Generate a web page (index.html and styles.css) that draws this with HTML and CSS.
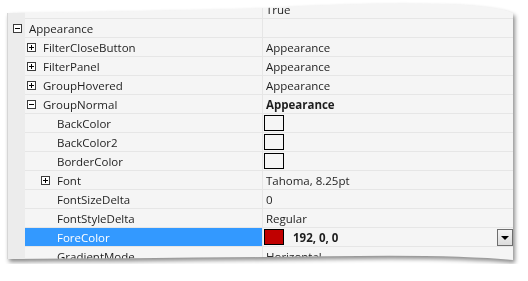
FILE: index.html
```html
<!DOCTYPE html>
<html lang="en">
<head>
    <meta charset="UTF-8">
    <meta name="viewport" content="width=device-width, initial-scale=1.0">
    <title>Property Grid</title>
    <link rel="stylesheet" href="styles.css">
</head>
<body>

    <div class="sheet">
        <div class="grid">

            <div class="row">
                <div class="gutter"></div>
                <div class="name l0"></div>
                <div class="value">True</div>
            </div>

            <div class="row">
                <div class="gutter"><span class="toggle"></span></div>
                <div class="name l0">Appearance</div>
                <div class="value"></div>
            </div>

            <div class="row">
                <div class="gutter"></div>
                <div class="name l1"><span class="toggle plus"></span>FilterCloseButton</div>
                <div class="value">Appearance</div>
            </div>

            <div class="row">
                <div class="gutter"></div>
                <div class="name l1"><span class="toggle plus"></span>FilterPanel</div>
                <div class="value">Appearance</div>
            </div>

            <div class="row">
                <div class="gutter"></div>
                <div class="name l1"><span class="toggle plus"></span>GroupHovered</div>
                <div class="value">Appearance</div>
            </div>

            <div class="row">
                <div class="gutter"></div>
                <div class="name l1"><span class="toggle"></span>GroupNormal</div>
                <div class="value bold">Appearance</div>
            </div>

            <div class="row">
                <div class="gutter"></div>
                <div class="name l2"><span class="toggle none"></span>BackColor</div>
                <div class="value"><span class="swatch"></span></div>
            </div>

            <div class="row">
                <div class="gutter"></div>
                <div class="name l2"><span class="toggle none"></span>BackColor2</div>
                <div class="value"><span class="swatch"></span></div>
            </div>

            <div class="row">
                <div class="gutter"></div>
                <div class="name l2"><span class="toggle none"></span>BorderColor</div>
                <div class="value"><span class="swatch"></span></div>
            </div>

            <div class="row">
                <div class="gutter"></div>
                <div class="name l2"><span class="toggle plus"></span>Font</div>
                <div class="value">Tahoma, 8.25pt</div>
            </div>

            <div class="row">
                <div class="gutter"></div>
                <div class="name l2"><span class="toggle none"></span>FontSizeDelta</div>
                <div class="value">0</div>
            </div>

            <div class="row">
                <div class="gutter"></div>
                <div class="name l2"><span class="toggle none"></span>FontStyleDelta</div>
                <div class="value">Regular</div>
            </div>

            <div class="row">
                <div class="gutter"></div>
                <div class="name l2 sel"><span class="toggle none"></span>ForeColor</div>
                <div class="value bold">
                    <span class="swatch red"></span>192, 0, 0
                    <span class="drop"></span>
                </div>
            </div>

            <div class="row">
                <div class="gutter"></div>
                <div class="name l2"><span class="toggle none"></span>GradientMode</div>
                <div class="value">Horizontal</div>
            </div>

        </div>
    </div>

</body>
</html>
```

FILE: styles.css
```css
body {
    margin: 0;
    background-color: #fff;
    font-family: 'Open Sans', 'Noto Sans', sans-serif;
    font-size: 11.5px;
    color: #1e1e1e;
}

.sheet {
    padding-left: 7px;
    filter: drop-shadow(2px 3px 2px rgba(0, 0, 0, 0.45));
}

/* curled page edges */
.grid {
    width: 506px;
    height: 264px;
    overflow: hidden;
    background-color: #f5f5f5;
    border-left: 1px solid #d6d6d6;
    box-sizing: border-box;
    clip-path: path('M 0 13 Q 140 11 259 8 Q 350 2 440 4 Q 490 6 506 13 L 506 260 Q 450 255 350 256 Q 170 258 0 259 Z');
}

.row {
    display: flex;
    height: 19px;
}

.gutter {
    width: 17px;
    flex: none;
    background-color: #ececec;
    display: flex;
    align-items: center;
    padding-left: 5px;
    box-sizing: border-box;
}

.name,
.value {
    display: flex;
    align-items: center;
    height: 19px;
    box-sizing: border-box;
    border-bottom: 1px solid #e6e6e6;
    white-space: nowrap;
}

.name {
    width: 238px;
    flex: none;
    border-right: 1px solid #e6e6e6;
}

.value {
    flex: 1;
    padding-left: 3px;
}

.l0 { padding-left: 4px; }
.l1 { padding-left: 2px; }
.l2 { padding-left: 16px; }

.sel {
    background-color: #3399ff;
    color: #fff;
}

.bold {
    font-weight: bold;
}

.toggle {
    position: relative;
    width: 9px;
    height: 9px;
    flex: none;
    margin-right: 7px;
    border: 1px solid #3c3c3c;
    background-color: #fff;
    box-sizing: border-box;
}

.gutter .toggle {
    margin-right: 0;
}

.toggle::before {
    content: "";
    position: absolute;
    left: 1px;
    top: 3px;
    width: 5px;
    height: 1px;
    background-color: #000;
}

.toggle.plus::after {
    content: "";
    position: absolute;
    left: 3px;
    top: 1px;
    width: 1px;
    height: 5px;
    background-color: #000;
}

.toggle.none {
    visibility: hidden;
}

.swatch {
    width: 20px;
    height: 16px;
    flex: none;
    border: 1px solid #000;
    box-sizing: border-box;
    margin-left: -2px;
}

.swatch.red {
    background-color: #c00000;
    margin-right: 9px;
}

.drop {
    position: relative;
    margin-left: auto;
    width: 16px;
    height: 17px;
    border: 1px solid #6e6e6e;
    box-sizing: border-box;
    background: linear-gradient(#f4f4f4, #dcdcdc);
}

.drop::after {
    content: "";
    position: absolute;
    left: 3px;
    top: 6px;
    border-left: 4px solid transparent;
    border-right: 4px solid transparent;
    border-top: 4px solid #000;
}
```
